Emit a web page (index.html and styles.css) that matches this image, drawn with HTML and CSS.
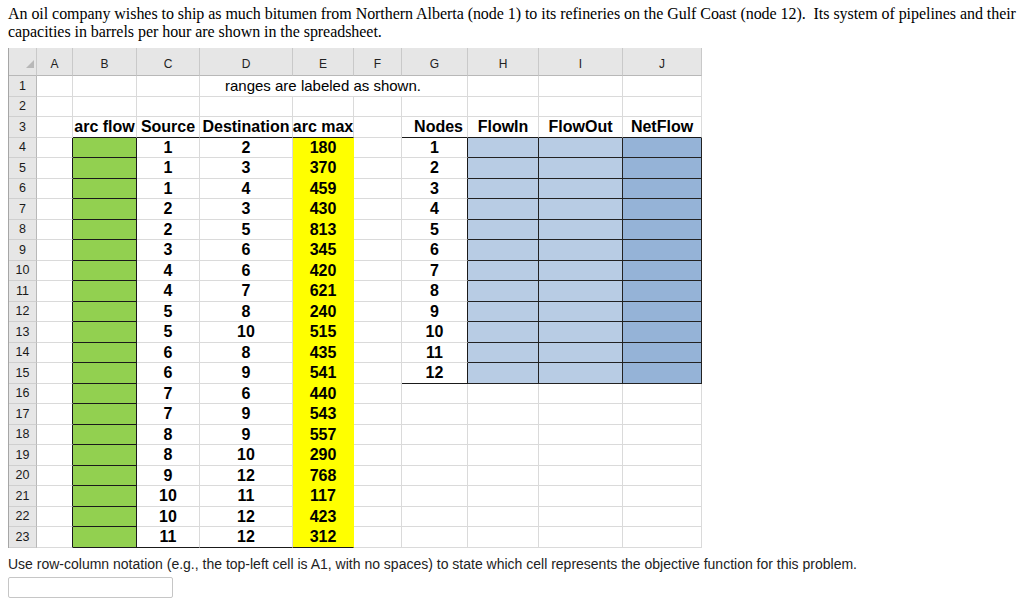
FILE: index.html
```html
<!DOCTYPE html>
<html>
<head>
<meta charset="utf-8">
<link rel="stylesheet" href="styles.css">
</head>
<body>
<div class="page">
<p class="intro">An oil company wishes to ship as much bitumen from Northern Alberta (node 1) to its refineries on the Gulf Coast (node 12).&nbsp; Its system of pipelines and their capacities in barrels per hour are shown in the spreadsheet.</p>

<div class="sheet">
  <div class="ch corner"><svg width="8" height="8" viewBox="0 0 8 8"><polygon points="8,0 8,8 0,8" fill="#b8b8b8"/></svg></div>
  <div class="ch">A</div><div class="ch">B</div><div class="ch">C</div><div class="ch">D</div><div class="ch">E</div><div class="ch">F</div><div class="ch">G</div><div class="ch">H</div><div class="ch">I</div><div class="ch">J</div>

  <div class="rh">1</div><div class="c"></div><div class="c"></div><div class="c"></div><div class="c note">ranges are labeled as shown.</div><div class="c"></div><div class="c"></div><div class="c"></div>
  <div class="rh">2</div><div class="c"></div><div class="c"></div><div class="c"></div><div class="c"></div><div class="c"></div><div class="c"></div><div class="c"></div><div class="c"></div><div class="c"></div><div class="c"></div>
  <div class="rh">3</div><div class="c"></div><div class="c n kb">arc flow</div><div class="c n kb">Source</div><div class="c n kb">Destination</div><div class="c n kb">arc max</div><div class="c"></div><div class="c n kb right">Nodes</div><div class="c n kb">FlowIn</div><div class="c n kb">FlowOut</div><div class="c n kb">NetFlow</div>

  <div class="rh">4</div><div class="c kr"></div><div class="c g"></div><div class="c n">1</div><div class="c n">2</div><div class="c n y">180</div><div class="c"></div><div class="c n kr">1</div><div class="c b1"></div><div class="c b1"></div><div class="c b2"></div>
  <div class="rh">5</div><div class="c kr"></div><div class="c g"></div><div class="c n">1</div><div class="c n">3</div><div class="c n y">370</div><div class="c"></div><div class="c n kr">2</div><div class="c b1"></div><div class="c b1"></div><div class="c b2"></div>
  <div class="rh">6</div><div class="c kr"></div><div class="c g"></div><div class="c n">1</div><div class="c n">4</div><div class="c n y">459</div><div class="c"></div><div class="c n kr">3</div><div class="c b1"></div><div class="c b1"></div><div class="c b2"></div>
  <div class="rh">7</div><div class="c kr"></div><div class="c g"></div><div class="c n">2</div><div class="c n">3</div><div class="c n y">430</div><div class="c"></div><div class="c n kr">4</div><div class="c b1"></div><div class="c b1"></div><div class="c b2"></div>
  <div class="rh">8</div><div class="c kr"></div><div class="c g"></div><div class="c n">2</div><div class="c n">5</div><div class="c n y">813</div><div class="c"></div><div class="c n kr">5</div><div class="c b1"></div><div class="c b1"></div><div class="c b2"></div>
  <div class="rh">9</div><div class="c kr"></div><div class="c g"></div><div class="c n">3</div><div class="c n">6</div><div class="c n y">345</div><div class="c"></div><div class="c n kr">6</div><div class="c b1"></div><div class="c b1"></div><div class="c b2"></div>
  <div class="rh">10</div><div class="c kr"></div><div class="c g"></div><div class="c n">4</div><div class="c n">6</div><div class="c n y">420</div><div class="c"></div><div class="c n kr">7</div><div class="c b1"></div><div class="c b1"></div><div class="c b2"></div>
  <div class="rh">11</div><div class="c kr"></div><div class="c g"></div><div class="c n">4</div><div class="c n">7</div><div class="c n y">621</div><div class="c"></div><div class="c n kr">8</div><div class="c b1"></div><div class="c b1"></div><div class="c b2"></div>
  <div class="rh">12</div><div class="c kr"></div><div class="c g"></div><div class="c n">5</div><div class="c n">8</div><div class="c n y">240</div><div class="c"></div><div class="c n kr">9</div><div class="c b1"></div><div class="c b1"></div><div class="c b2"></div>
  <div class="rh">13</div><div class="c kr"></div><div class="c g"></div><div class="c n">5</div><div class="c n">10</div><div class="c n y">515</div><div class="c"></div><div class="c n kr">10</div><div class="c b1"></div><div class="c b1"></div><div class="c b2"></div>
  <div class="rh">14</div><div class="c kr"></div><div class="c g"></div><div class="c n">6</div><div class="c n">8</div><div class="c n y">435</div><div class="c"></div><div class="c n kr">11</div><div class="c b1"></div><div class="c b1"></div><div class="c b2"></div>
  <div class="rh">15</div><div class="c kr"></div><div class="c g"></div><div class="c n">6</div><div class="c n">9</div><div class="c n y">541</div><div class="c"></div><div class="c n kr kb">12</div><div class="c b1"></div><div class="c b1"></div><div class="c b2"></div>
  <div class="rh">16</div><div class="c kr"></div><div class="c g"></div><div class="c n">7</div><div class="c n">6</div><div class="c n y">440</div><div class="c"></div><div class="c"></div><div class="c"></div><div class="c"></div><div class="c"></div>
  <div class="rh">17</div><div class="c kr"></div><div class="c g"></div><div class="c n">7</div><div class="c n">9</div><div class="c n y">543</div><div class="c"></div><div class="c"></div><div class="c"></div><div class="c"></div><div class="c"></div>
  <div class="rh">18</div><div class="c kr"></div><div class="c g"></div><div class="c n">8</div><div class="c n">9</div><div class="c n y">557</div><div class="c"></div><div class="c"></div><div class="c"></div><div class="c"></div><div class="c"></div>
  <div class="rh">19</div><div class="c kr"></div><div class="c g"></div><div class="c n">8</div><div class="c n">10</div><div class="c n y">290</div><div class="c"></div><div class="c"></div><div class="c"></div><div class="c"></div><div class="c"></div>
  <div class="rh">20</div><div class="c kr"></div><div class="c g"></div><div class="c n">9</div><div class="c n">12</div><div class="c n y">768</div><div class="c"></div><div class="c"></div><div class="c"></div><div class="c"></div><div class="c"></div>
  <div class="rh">21</div><div class="c kr"></div><div class="c g"></div><div class="c n">10</div><div class="c n">11</div><div class="c n y">117</div><div class="c"></div><div class="c"></div><div class="c"></div><div class="c"></div><div class="c"></div>
  <div class="rh">22</div><div class="c kr"></div><div class="c g"></div><div class="c n">10</div><div class="c n">12</div><div class="c n y">423</div><div class="c"></div><div class="c"></div><div class="c"></div><div class="c"></div><div class="c"></div>
  <div class="rh">23</div><div class="c kr"></div><div class="c g"></div><div class="c n kb">11</div><div class="c n kb">12</div><div class="c n y kb">312</div><div class="c"></div><div class="c"></div><div class="c"></div><div class="c"></div><div class="c"></div>
</div>

<p class="question">Use row-column notation (e.g., the top-left cell is A1, with no spaces) to state which cell represents the objective function for this problem.</p>
<input class="answer" type="text">
</div>
</body>
</html>
```

FILE: styles.css
```css
html, body {
  margin: 0;
  padding: 0;
  background: #ffffff;
}

.page {
  padding: 5px 8px 8px 8px;
}

.intro {
  margin: 0 -4px 0 0;
  font-family: "Liberation Serif", "Times New Roman", serif;
  font-size: 16px;
  line-height: 18px;
  letter-spacing: -0.05px;
  color: #000;
}

.sheet {
  margin-top: 7px;
  display: grid;
  grid-template-columns: 28px 36px 64px 63px 93px 61px 48px 66px 71px 84px 79px;
  grid-template-rows: 28px repeat(23, 20.5px);
  width: max-content;
  border-left: 1px solid #a6a6a6;
  font-family: "Liberation Sans", Arial, sans-serif;
  color: #000;
}

.sheet > div {
  box-sizing: border-box;
  display: flex;
  align-items: center;
  justify-content: center;
  white-space: nowrap;
  overflow: visible;
}

.ch {
  background: #e6e6e6;
  border-right: 1px solid #c9c9c9;
  border-bottom: 1px solid #b8b8b8;
  font-size: 12px;
  color: #222;
  align-items: flex-end !important;
  padding-bottom: 4px;
}

.corner {
  justify-content: flex-end !important;
  padding-right: 2px;
  padding-bottom: 7px;
}

.corner svg {
  display: block;
}

.rh {
  background: #e6e6e6;
  border-right: 1px solid #b8b8b8;
  border-bottom: 1px solid #cfcfcf;
  font-size: 12.5px;
  color: #1a1a1a;
}

.c {
  border-right: 1px solid #dadada;
  border-bottom: 1px solid #dadada;
}

.n {
  font-weight: 700;
  font-size: 16px;
  padding-top: 1px;
}

.note {
  grid-column: span 4;
  justify-content: flex-start !important;
  padding-left: 25px;
  font-size: 15px;
}

.right {
  justify-content: flex-end !important;
  padding-right: 4px;
}

.g {
  background: #92d050;
  border-right-color: #1a1a1a;
  border-bottom-color: #1a1a1a;
}

.y {
  background: #ffff00;
  border-right-color: #ffff00;
  border-bottom-color: #ffff00;
}

.b1 {
  background: #b8cce4;
  border-right-color: #222;
  border-bottom-color: #222;
}

.b2 {
  background: #95b3d7;
  border-right-color: #222;
  border-bottom-color: #222;
}

.kr {
  border-right-color: #1a1a1a;
}

.kb {
  border-bottom-color: #1a1a1a;
}

.question {
  margin: 8px 0 5px 0;
  font-family: "Liberation Sans", Arial, sans-serif;
  font-size: 14px;
  line-height: 16px;
  color: #222;
}

.answer {
  display: block;
  box-sizing: border-box;
  width: 165px;
  height: 21px;
  margin: 0;
  border: 1px solid #c6c6c6;
  border-radius: 2px;
  background: #fff;
}
```
